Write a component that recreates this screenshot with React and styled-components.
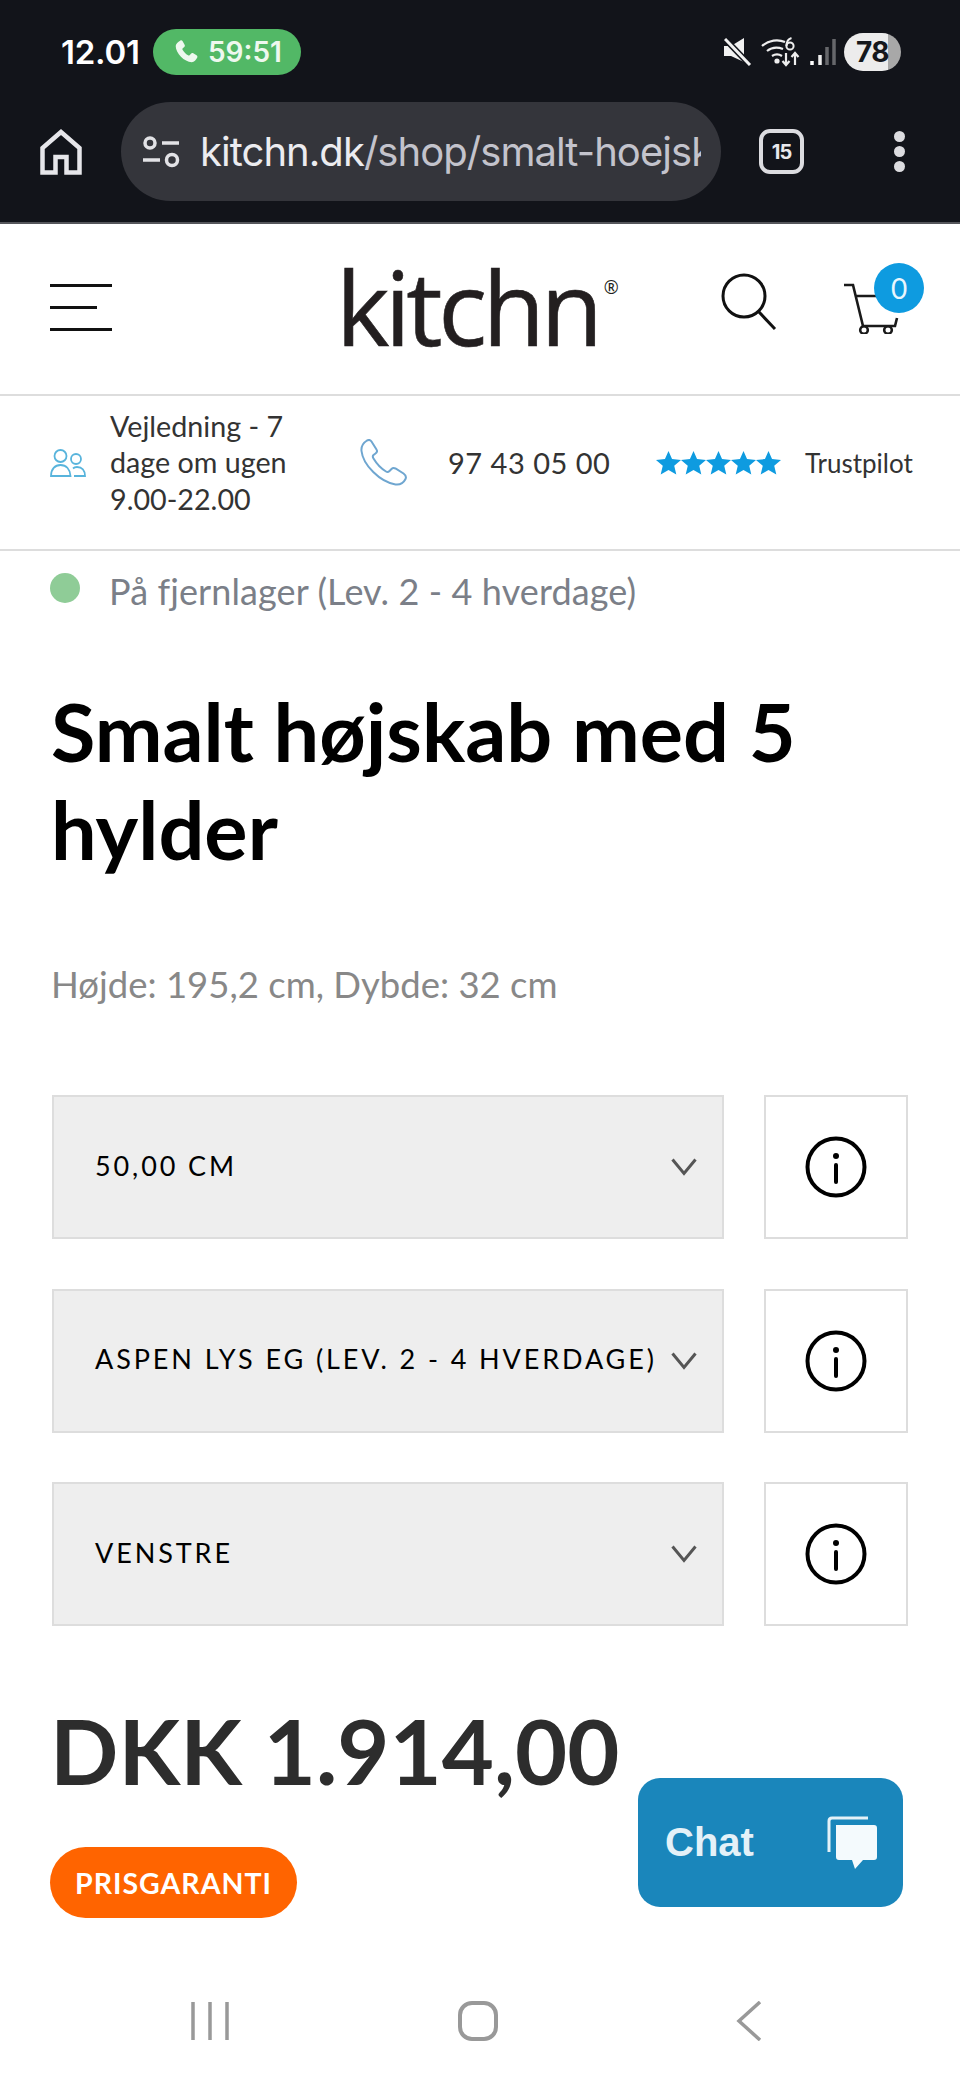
import React from 'react';
import styled, { createGlobalStyle } from 'styled-components';

const GlobalStyle = createGlobalStyle`
  html, body { margin: 0; padding: 0; background: #fff; }
  * { box-sizing: border-box; }
`;

const Page = styled.div`
  position: relative;
  width: 960px;
  height: 2080px;
  overflow: hidden;
  background: #fff;
  font-family: Lato, "Open Sans", sans-serif;
  display: flex;
  flex-direction: column;
`;

const Chrome = styled.div`
  height: 224px;
  flex: none;
  background: #12141a;
  border-bottom: 2px solid #55565b;
  font-family: Inter, Roboto, sans-serif;
`;

const StatusBar = styled.div`
  height: 102px;
  padding: 29px 59px 0 61px;
  display: flex;
  align-items: flex-start;
`;

const Clock = styled.span`
  font-size: 33px;
  font-weight: 600;
  line-height: 46px;
  color: #fff;
  letter-spacing: -0.2px;
  width: 92px;
`;

const CallPill = styled.div`
  width: 148px;
  height: 46px;
  border-radius: 23px;
  background: #52b866;
  display: flex;
  align-items: center;
  padding-left: 20px;
  gap: 9px;
  color: #eef8ef;
  font-size: 28px;
  font-weight: 600;
`;

const StatusIcons = styled.div`
  margin-left: auto;
  height: 46px;
  display: flex;
  align-items: center;
  gap: 9px;
`;

const Battery = styled.div`
  width: 57px;
  height: 38px;
  margin-left: -1px;
  border-radius: 19px;
  background: linear-gradient(90deg, #ececec 0 78%, #a8a8a8 78% 100%);
  color: #15171c;
  font-size: 28px;
  font-weight: 700;
  text-align: center;
  line-height: 38px;
  letter-spacing: -0.5px;
`;

const UrlRow = styled.div`
  display: flex;
  align-items: center;
  height: 99px;
  padding-left: 40px;
`;

const UrlPill = styled.div`
  width: 600px;
  height: 99px;
  margin-left: 39px;
  margin-right: 38px;
  border-radius: 50px;
  background: #34353b;
  display: flex;
  align-items: center;
  padding-left: 21px;
  gap: 20px;
`;

const UrlText = styled.div`
  width: 299px;
  flex: 1;
  margin-right: 20px;
  overflow: hidden;
  white-space: nowrap;
  font-size: 40px;
  font-weight: 400;
  color: #c3c3cc;
  letter-spacing: -0.95px;
  b { font-weight: 400; color: #ececf0; }
`;

const TabCount = styled.div`
  width: 45px;
  height: 45px;
  border: 4px solid #dcdce0;
  border-radius: 11px;
  color: #e8e8ec;
  font-size: 20px;
  font-weight: 700;
  display: flex;
  align-items: center;
  justify-content: center;
  letter-spacing: -1px;
`;

const MenuDots = styled.div`
  margin-left: 90px;
  display: flex;
  flex-direction: column;
  gap: 4px;
  i {
    width: 11px;
    height: 11px;
    border-radius: 50%;
    background: #dcdce0;
  }
`;

const SiteHeader = styled.header`
  height: 172px;
  flex: none;
  border-bottom: 2px solid #ddd;
  display: flex;
  align-items: flex-start;
  padding-left: 50px;
`;

const Burger = styled.div`
  width: 62px;
  margin-top: 60px;
  display: flex;
  flex-direction: column;
  gap: 19px;
  i {
    display: block;
    height: 3px;
    background: #111;
  }
  i:nth-child(2) { width: 47px; }
`;

const Logo = styled.div`
  margin-left: 224px;
  margin-top: 18px;
  width: 294px;
  font-family: "Open Sans", sans-serif;
  font-size: 102px;
  line-height: 130px;
  font-weight: 500;
  letter-spacing: -4.5px;
  -webkit-text-stroke: 0.6px #231f20;
  color: #231f20;
  display: flex;
  align-items: flex-start;
  sup {
    font-size: 18px;
    line-height: 18px;
    font-weight: 400;
    letter-spacing: 0;
    -webkit-text-stroke: 0;
    margin: 36px 0 0 5px;
  }
`;

const HeaderIcons = styled.div`
  margin-left: 91px;
  margin-top: 46px;
  display: flex;
  align-items: flex-start;
`;

const SearchIcon = styled.svg`
  margin-top: 2px;
`;

const CartWrap = styled.div`
  position: relative;
  margin-left: 66px;
`;

const CartBadge = styled.div`
  position: absolute;
  left: 31px;
  top: -7px;
  width: 50px;
  height: 50px;
  border-radius: 50%;
  background: #0e9be0;
  color: #eaf6fd;
  font-size: 28px;
  display: flex;
  align-items: center;
  justify-content: center;
`;

const InfoBar = styled.div`
  height: 155px;
  flex: none;
  border-bottom: 2px solid #ddd;
  display: flex;
  align-items: center;
  padding: 0 0 20px 50px;
  color: #333;
  font-size: 29px;
`;

const GuideText = styled.div`
  width: 190px;
  margin-left: 24px;
  margin-right: 1px;
  font-size: 28.7px;
  line-height: 36.5px;
`;

const PhoneIcon = styled.svg`
  margin-left: 59px;
`;

const PhoneText = styled.div`
  margin-left: 40px;
  width: 208px;
  white-space: nowrap;
  letter-spacing: 0.5px;
`;

const Stars = styled.div`
  display: flex;
  width: 149px;
`;

const TrustLabel = styled.span`
  font-size: 26px;
`;

const Stock = styled.div`
  display: flex;
  align-items: center;
  height: 80px;
  flex: none;
  padding-left: 50px;
  color: #7b7f88;
  font-size: 36px;
  letter-spacing: 0.1px;
`;

const StockDot = styled.span`
  width: 30px;
  height: 30px;
  border-radius: 50%;
  background: #8fcc97;
  margin-right: 29px;
  margin-top: -7px;
`;

const Content = styled.main`
  flex: 1;
  padding: 0 52px;
  display: flex;
  flex-direction: column;
`;

const Title = styled.h1`
  margin: 51px 0 0 -1px;
  font-size: 81px;
  line-height: 98px;
  font-weight: 700;
  color: #000;
  width: 800px;
`;

const Dimensions = styled.p`
  margin: 84px 0 0 -1px;
  color: #888;
  font-size: 36.5px;
  line-height: 44px;
`;

const Options = styled.div`
  margin-top: 89px;
  display: flex;
  flex-direction: column;
  gap: 49.5px;
`;

const OptionRow = styled.div`
  display: flex;
  gap: 40px;
  height: 144px;
`;

const SelectBox = styled.div`
  width: 672px;
  background: #eee;
  border: 2px solid #ddd;
  display: flex;
  align-items: center;
  justify-content: space-between;
  padding: 0 25px 0 41px;
  color: #000;
  font-size: 27px;
  letter-spacing: 2.9px;
  white-space: nowrap;
  span { padding-bottom: 4px; }
`;

const InfoBox = styled.div`
  width: 144px;
  border: 2px solid #ddd;
  display: flex;
  align-items: center;
  justify-content: center;
`;

const Price = styled.div`
  margin: 69px 0 0 -2px;
  font-size: 90px;
  line-height: 110px;
  font-weight: 700;
  color: #2d2d2d;
`;

const Guarantee = styled.div`
  margin-top: 42px;
  margin-left: -2px;
  width: 247px;
  height: 71px;
  border-radius: 36px;
  background: #ff6400;
  color: #fff;
  font-size: 28.5px;
  font-weight: 700;
  letter-spacing: 1px;
  display: flex;
  align-items: center;
  justify-content: center;
`;

const ChatButton = styled.div`
  position: absolute;
  left: 638px;
  top: 1778px;
  width: 265px;
  height: 129px;
  border-radius: 22px;
  background: #1a86bb;
  display: flex;
  align-items: center;
  justify-content: space-between;
  padding: 0 26px 0 27px;
  color: #e4f1f8;
  font-family: "Liberation Sans", sans-serif;
  font-weight: 700;
  font-size: 40px;
`;

const NavBar = styled.nav`
  height: 158px;
  flex: none;
  display: flex;
  align-items: flex-start;
  padding: 79px 0 0 191px;
`;

const NavHome = styled.svg`
  margin-left: 229px;
`;

const NavBack = styled.svg`
  margin-left: 238px;
`;

const Star = () => (
  <svg width="25" height="24" viewBox="0 0 24 23">
    <path fill="#0e9be0" d="M12 0l3.4 7.7 8.6.8-6.5 5.6 2 8.4L12 18.200l-7.500 4.300 2-8.400L0 8.500l8.600-.8z" />
  </svg>
);

const InfoIcon = () => (
  <svg width="62" height="62" viewBox="0 0 62 62" fill="none" stroke="#000" strokeLinecap="round">
    <circle cx="31" cy="31" r="28.500" strokeWidth="4" />
    <circle cx="31" cy="20" r="3" fill="#000" stroke="none" />
    <path d="M31 29v17" strokeWidth="4" />
  </svg>
);

const Chevron = () => (
  <svg width="26" height="18" viewBox="0 0 26 18" fill="none" stroke="#555" strokeWidth="3">
    <path d="M1.500 1.500L13 15.500 24.500 1.500" />
  </svg>
);

const options = ['50,00 CM', 'ASPEN LYS EG (LEV. 2 - 4 HVERDAGE)', 'VENSTRE'];

export default function App() {
  return (
    <Page>
      <GlobalStyle />
      <Chrome>
        <StatusBar>
          <Clock>12.01</Clock>
          <CallPill>
            <svg width="26" height="26" viewBox="0 0 24 24">
              <path fill="#eef8ef" d="M6.600 1.500c.8-.5 1.800-.3 2.300.5l1.800 3.200c.4.700.3 1.600-.3 2.100L9 8.600c-.4.400-.5.900-.2 1.400 1.200 2.100 2.900 3.800 5.100 5.100.5.300 1 .2 1.400-.2l1.300-1.400c.5-.6 1.400-.7 2.100-.3l3 1.800c.8.500 1.100 1.500.6 2.300-1.100 2-2.600 4.100-5 4.100C10.500 21.400 2.500 13 2.500 6.500c0-2.300 2.200-3.900 4.100-5z" />
            </svg>
            59:51
          </CallPill>
          <StatusIcons>
            <svg width="28" height="28" viewBox="0 0 28 28">
              <path fill="#f2f2f2" d="M0 8h7L20 0v24L7 18H0z" />
              <path d="M0 0l26 27" stroke="#12141a" strokeWidth="6" />
              <path d="M1 1l25 26" stroke="#f2f2f2" strokeWidth="3" />
            </svg>
            <svg width="40" height="30" viewBox="0 0 40 30" fill="none" stroke="#eee" strokeWidth="2.200">
              <path d="M1 9c7-6 16-7 23-4M6 14c5-4 11-4 16-2M11 19c3-2 7-2 10 0" />
              <circle cx="16" cy="24" r="1.500" fill="#eee" />
              <circle cx="29" cy="9" r="3.600" strokeWidth="2" />
              <path d="M25.500 9c0-4 1.500-7 5-8" strokeWidth="2" />
              <path d="M25 16v12m-3.500-4l3.500 4 3.500-4M34 28V16m-3.500 4l3.500-4 3.500 4" />
            </svg>
            <svg width="26" height="28" viewBox="0 0 26 28" fill="none" strokeWidth="3.500">
              <path d="M2 27v-4" stroke="#fff" />
              <path d="M10 27V17" stroke="#eee" />
              <path d="M17 27V9" stroke="#66676b" />
              <path d="M24 27V1" stroke="#66676b" />
            </svg>
            <Battery>78</Battery>
          </StatusIcons>
        </StatusBar>
        <UrlRow>
          <svg width="42" height="46" viewBox="0 0 42 46" fill="none" stroke="#e6e6ea" strokeWidth="4.500">
            <path d="M21 3L2.500 19v24.500h13V28h11v15.500h13V19z" strokeLinejoin="miter" />
          </svg>
          <UrlPill>
            <svg width="38" height="34" viewBox="0 0 38 34" fill="none" stroke="#e2e2e6" strokeWidth="3.500">
              <circle cx="8" cy="8" r="5" />
              <path d="M20 8h17M1 25h17" />
              <circle cx="30" cy="25" r="5.500" />
            </svg>
            <UrlText><b>kitchn.dk</b>/shop/smalt-hoejsk</UrlText>
          </UrlPill>
          <TabCount>15</TabCount>
          <MenuDots><i /><i /><i /></MenuDots>
        </UrlRow>
      </Chrome>

      <SiteHeader>
        <Burger><i /><i /><i /></Burger>
        <Logo>kitchn<sup>®</sup></Logo>
        <HeaderIcons>
          <SearchIcon width="56" height="60" viewBox="0 0 56 60" fill="none" stroke="#111">
            <circle cx="23" cy="24" r="21" strokeWidth="3" />
            <path d="M38 40l16 17" strokeWidth="3" />
          </SearchIcon>
          <CartWrap>
            <svg width="60" height="64" viewBox="0 0 60 64" fill="none" stroke="#1a1a1a" strokeWidth="2.600">
              <path d="M1 15h9l10 41h32l2-8M12 26h30" />
              <circle cx="21" cy="60" r="3.800" />
              <circle cx="45" cy="60" r="3.800" />
            </svg>
            <CartBadge>0</CartBadge>
          </CartWrap>
        </HeaderIcons>
      </SiteHeader>

      <InfoBar>
        <svg width="36" height="28" viewBox="0 0 36 28" fill="none" stroke="#58b4dc" strokeWidth="1.800">
          <circle cx="10.500" cy="7" r="6" />
          <path d="M1 27c0-7 4-11 9.500-11S20 20 20.500 27z" />
          <circle cx="26" cy="10" r="5" />
          <path d="M24 27h11c0-6-3-9-8-9-2 0-3 .5-4 1.500" />
        </svg>
        <GuideText>Vejledning - 7 dage om ugen 9.00-22.00</GuideText>
        <PhoneIcon width="48" height="48" viewBox="0 0 48 48" fill="none" stroke="#6fa6d0" strokeWidth="2">
          <path d="M7 1.500c2-1 3.500-.5 4.500 1l5 8c1 1.500.5 3-1 4l-2 1.500c-1 1-1 2 0 3.500 3 5 7.500 10 12.500 13 1.500 1 2.500.5 3.500-.5l2-2c1.200-1.200 2.500-1.200 4-.5l8 5c2 1.500 3 3.500 2 5.500-2 4-6 6-10 5.500C20 43 3 26 1.500 12 1 7.500 3 4 7 1.500z" />
        </PhoneIcon>
        <PhoneText>97 43 05 00</PhoneText>
        <Stars><Star /><Star /><Star /><Star /><Star /></Stars>
        <TrustLabel>Trustpilot</TrustLabel>
      </InfoBar>

      <Stock><StockDot />På fjernlager (Lev. 2 - 4 hverdage)</Stock>

      <Content>
        <Title>Smalt højskab med 5 hylder</Title>
        <Dimensions>Højde: 195,2 cm, Dybde: 32 cm</Dimensions>
        <Options>
          {options.map((option) => (
            <OptionRow key={option}>
              <SelectBox><span>{option}</span><Chevron /></SelectBox>
              <InfoBox><InfoIcon /></InfoBox>
            </OptionRow>
          ))}
        </Options>
        <Price>DKK 1.914,00</Price>
        <Guarantee>PRISGARANTI</Guarantee>
      </Content>

      <ChatButton>
        Chat
        <svg width="50" height="54" viewBox="0 0 50 54">
          <path fill="none" stroke="#e4f1f8" strokeWidth="3" d="M2 36V5q0-3 3-3h36" />
          <path fill="#f4fafd" d="M9 9h38q3 0 3 3v29q0 3-3 3H36l-8 9-3-9H12q-3 0-3-3z" />
        </svg>
      </ChatButton>

      <NavBar>
        <svg width="38" height="40" viewBox="0 0 38 40" fill="none" stroke="#999" strokeWidth="3.500">
          <path d="M2 1v38M19 1v38M36 1v38" />
        </svg>
        <NavHome width="40" height="40" viewBox="0 0 40 40" fill="none" stroke="#999" strokeWidth="4">
          <rect x="2" y="2" width="36" height="36" rx="12" />
        </NavHome>
        <NavBack width="26" height="40" viewBox="0 0 26 40" fill="none" stroke="#999" strokeWidth="3.500">
          <path d="M24 1L3 20l21 19" />
        </NavBack>
      </NavBar>
    </Page>
  );
}
